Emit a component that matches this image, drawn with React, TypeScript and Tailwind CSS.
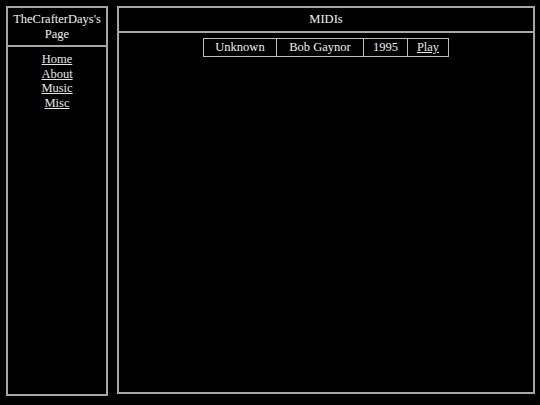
const links = ['Home', 'About', 'Music', 'Misc']

const midis = [{ title: 'Unknown', artist: 'Bob Gaynor', year: '1995' }]

export default function App() {
  return (
    <div className="w-[540px] h-[405px] bg-black text-[#f2f2f2] flex gap-[9px] pl-[6px] pt-[6px] text-[12.5px] leading-[14.5px] font-['Liberation_Serif',serif]">
      {/* sidebar */}
      <aside className="w-[102px] h-[390px] border-2 border-[#a6a6a6] flex flex-col">
        <div className="h-[39px] border-b-2 border-[#a6a6a6] text-center pt-[4px]">
          TheCrafterDays's
          <br />
          Page
        </div>
        <nav className="flex flex-col items-center pt-[5px]">
          {links.map(l => (
            <a key={l} href="#" className="underline text-[#e6e6e6]">
              {l}
            </a>
          ))}
        </nav>
      </aside>

      {/* main */}
      <main className="w-[418px] h-[388px] border-2 border-[#a6a6a6] flex flex-col">
        <div className="h-[25px] border-b-2 border-[#a6a6a6] flex items-center justify-center">MIDIs</div>
        <div className="flex justify-center pt-[5px]">
          <table className="border-collapse border border-[#bdbdbd]">
            <tbody>
              {midis.map(m => (
                <tr key={m.title} className="h-[18px]">
                  <td className="w-[73px] border border-[#bdbdbd] text-center p-0">{m.title}</td>
                  <td className="w-[87px] border border-[#bdbdbd] text-center p-0">{m.artist}</td>
                  <td className="w-[44px] border border-[#bdbdbd] text-center p-0">{m.year}</td>
                  <td className="w-[41px] border border-[#bdbdbd] text-center p-0">
                    <a href="#" className="underline text-[#e6e6e6]">Play</a>
                  </td>
                </tr>
              ))}
            </tbody>
          </table>
        </div>
      </main>
    </div>
  )
}
